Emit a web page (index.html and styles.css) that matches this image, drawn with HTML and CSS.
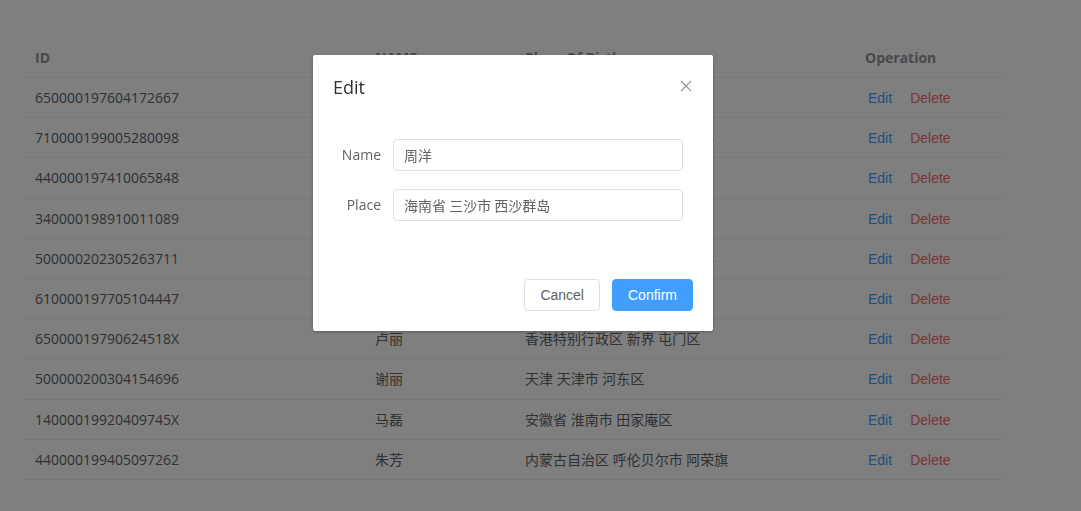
FILE: index.html
```html
<!DOCTYPE html>
<html lang="zh-CN">
<head>
<meta charset="utf-8">
<title>Table</title>
<link rel="stylesheet" href="styles.css">
</head>
<body>
<div class="page">
  <table class="grid">
    <colgroup>
      <col class="c-id"><col class="c-name"><col class="c-place"><col class="c-op">
    </colgroup>
    <thead>
      <tr><th>ID</th><th>NAME</th><th>Place Of Birth</th><th>Operation</th></tr>
    </thead>
    <tbody>
      <tr><td>650000197604172667</td><td>周洋</td><td>海南省 三沙市 西沙群岛</td><td class="ops"><a class="edit">Edit</a><a class="del">Delete</a></td></tr>
      <tr><td>710000199005280098</td><td>张静</td><td>广西壮族自治区 百色市 德保县</td><td class="ops"><a class="edit">Edit</a><a class="del">Delete</a></td></tr>
      <tr><td>440000197410065848</td><td>刘敏</td><td>广东省 汕头市 潮阳区</td><td class="ops"><a class="edit">Edit</a><a class="del">Delete</a></td></tr>
      <tr><td>340000198910011089</td><td>王芳</td><td>安徽省 合肥市 庐阳区</td><td class="ops"><a class="edit">Edit</a><a class="del">Delete</a></td></tr>
      <tr><td>500000202305263711</td><td>李强</td><td>西藏自治区 日喀则地区 萨迦县</td><td class="ops"><a class="edit">Edit</a><a class="del">Delete</a></td></tr>
      <tr><td>610000197705104447</td><td>陈杰</td><td>陕西省 西安市 雁塔区</td><td class="ops"><a class="edit">Edit</a><a class="del">Delete</a></td></tr>
      <tr><td>65000019790624518X</td><td>卢丽</td><td>香港特别行政区 新界 屯门区</td><td class="ops"><a class="edit">Edit</a><a class="del">Delete</a></td></tr>
      <tr><td>500000200304154696</td><td>谢丽</td><td>天津 天津市 河东区</td><td class="ops"><a class="edit">Edit</a><a class="del">Delete</a></td></tr>
      <tr><td>14000019920409745X</td><td>马磊</td><td>安徽省 淮南市 田家庵区</td><td class="ops"><a class="edit">Edit</a><a class="del">Delete</a></td></tr>
      <tr><td>440000199405097262</td><td>朱芳</td><td>内蒙古自治区 呼伦贝尔市 阿荣旗</td><td class="ops"><a class="edit">Edit</a><a class="del">Delete</a></td></tr>
    </tbody>
  </table>
</div>

<div class="overlay">
  <div class="dialog">
    <div class="dialog-header">
      <span class="dialog-title">Edit</span>
      <button class="dialog-close" aria-label="Close">
        <svg width="12" height="12" viewBox="0 0 12 12"><path d="M1 1L11 11M11 1L1 11" stroke="#909399" stroke-width="1.1" fill="none"/></svg>
      </button>
    </div>
    <div class="dialog-body">
      <div class="form-item">
        <label class="form-label">Name</label>
        <div class="input"><input value="周洋"></div>
      </div>
      <div class="form-item">
        <label class="form-label">Place</label>
        <div class="input"><input value="海南省 三沙市 西沙群岛"></div>
      </div>
    </div>
    <div class="dialog-footer">
      <button class="btn">Cancel</button>
      <button class="btn btn-primary">Confirm</button>
    </div>
  </div>
</div>
</body>
</html>
```
FILE: styles.css
```css
html, body {
  margin: 0;
  padding: 0;
  background: #fff;
}
body {
  font-family: "Open Sans", "Noto Sans CJK SC", sans-serif;
  color: #606266;
  font-size: 14px;
}
.page {
  padding: 38px 25px 0 25px;
}
.grid {
  width: 978px;
  border-collapse: collapse;
  table-layout: fixed;
}
.c-id { width: 340px; }
.c-name { width: 150px; }
.c-place { width: 340px; }
.c-op { width: 148px; }
.grid th, .grid td {
  text-align: left;
  padding: 0 10px;
  height: 39px;
  border-bottom: 1px solid #ebeef5;
  white-space: nowrap;
  line-height: 20px;
  vertical-align: middle;
}
.grid td {
  color: #606266;
  height: 38.2px;
  padding-top: 1px;
}
.grid th {
  color: #909399;
  font-weight: 700;
  font-size: 14px;
}
.ops a {
  font-family: "Liberation Sans", Arial, sans-serif;
  cursor: pointer;
  font-size: 14px;
}
.ops .edit {
  color: #409eff;
  margin-left: 3px;
  margin-right: 18px;
}
.ops .del {
  color: #f56c6c;
}

.overlay {
  position: fixed;
  inset: 0;
  background: rgba(0, 0, 0, 0.5);
}
.dialog {
  position: absolute;
  left: 313px;
  top: 55px;
  width: 400px;
  background: #fff;
  border-radius: 2px;
  box-shadow: 0 1px 3px rgba(0, 0, 0, 0.3);
}
.dialog-header {
  padding: 20px 20px 10px;
  display: flex;
  align-items: center;
  justify-content: space-between;
}
.dialog-title {
  font-size: 18px;
  line-height: 24px;
  color: #303133;
}
.dialog-close {
  border: 0;
  background: none;
  padding: 0;
  width: 12px;
  height: 12px;
  margin-right: 1px;
  margin-top: -2px;
  display: flex;
}
.dialog-body {
  padding: 30px 20px;
}
.form-item {
  display: flex;
  align-items: center;
  margin-bottom: 18px;
}
.form-label {
  width: 60px;
  box-sizing: border-box;
  padding-right: 12px;
  text-align: right;
  line-height: 32px;
  color: #606266;
  font-size: 14px;
}
.input {
  width: 290px;
}
.input input {
  box-sizing: border-box;
  width: 100%;
  height: 32px;
  border: 1px solid #dcdfe6;
  border-radius: 4px;
  padding: 0 10px;
  font-family: "Noto Sans CJK SC", sans-serif;
  font-size: 14px;
  color: #606266;
  outline: none;
}
.dialog-footer {
  padding: 10px 20px 20px;
  display: flex;
  justify-content: flex-end;
  gap: 12px;
}
.btn {
  font-family: "Liberation Sans", Arial, sans-serif;
  font-size: 14px;
  line-height: 14px;
  height: 32px;
  padding: 8px 15px;
  box-sizing: border-box;
  border: 1px solid #dcdfe6;
  border-radius: 4px;
  background: #fff;
  color: #606266;
}
.btn-primary {
  background: #409eff;
  border-color: #409eff;
  color: #fff;
}
```
